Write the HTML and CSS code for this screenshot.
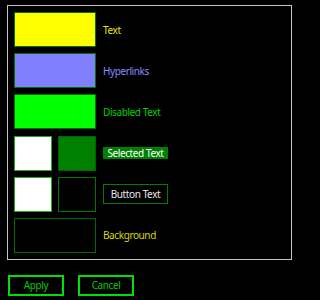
FILE: index.html
```html
<!DOCTYPE html>
<html>
<head>
<meta charset="utf-8">
<link rel="stylesheet" href="styles.css">
</head>
<body>
<div class="frame">
  <div class="row">
    <div class="swatch wide yellow"></div>
    <span class="label l-text">Text</span>
  </div>
  <div class="row">
    <div class="swatch wide blue"></div>
    <span class="label l-link">Hyperlinks</span>
  </div>
  <div class="row">
    <div class="swatch wide green"></div>
    <span class="label l-disabled">Disabled Text</span>
  </div>
  <div class="row">
    <div class="pair">
      <div class="swatch small white"></div>
      <div class="swatch small dkgreen"></div>
    </div>
    <span class="label l-selected">Selected Text</span>
  </div>
  <div class="row">
    <div class="pair">
      <div class="swatch small white"></div>
      <div class="swatch small black"></div>
    </div>
    <span class="label l-button">Button Text</span>
  </div>
  <div class="row">
    <div class="swatch wide bg"></div>
    <span class="label l-bg">Background</span>
  </div>
</div>
<div class="actions">
  <button class="btn">Apply</button>
  <button class="btn">Cancel</button>
</div>
</body>
</html>
```

FILE: styles.css
```css
html, body {
  margin: 0;
  padding: 0;
  background: #000;
}
body {
  width: 300px;
  height: 300px;
  overflow: hidden;
  font-family: "Noto Sans", "Liberation Sans", sans-serif;
  font-size: 10px;
  letter-spacing: -0.4px;
}
.frame {
  box-sizing: border-box;
  margin: 5px 0 0 7px;
  width: 285px;
  height: 255px;
  border: 1px solid #c4c4c4;
  padding: 6px 0 0 6px;
  display: flex;
  flex-direction: column;
  gap: 6.2px;
}
.row {
  display: flex;
  align-items: center;
  gap: 7px;
  height: 35px;
}
.swatch {
  box-sizing: border-box;
  height: 35px;
  border: 1px solid #007000;
}
.wide { width: 82px; }
.pair {
  display: flex;
  gap: 6px;
  width: 82px;
}
.small { width: 38px; }
.yellow { background: #ffff00; }
.blue { background: #8080ff; }
.green { background: #00ff00; }
.white { background: #fff; border-color: #1fa81f; }
.dkgreen { background: #008000; border-color: #006400; }
.black { background: #000; border-color: #007800; }
.bg { background: #000; border-color: #006c00; }
.label { white-space: nowrap; }
.l-text { color: #e8e800; }
.l-link { color: #8a8aff; }
.l-disabled { color: #00d000; }
.l-selected {
  box-sizing: border-box;
  width: 65px;
  height: 12px;
  line-height: 12px;
  background: #008000;
  color: #fff;
  text-align: center;
}
.l-button {
  box-sizing: border-box;
  width: 65px;
  height: 20px;
  line-height: 18px;
  border: 1px solid #008000;
  color: #e8e8e8;
  text-align: center;
}
.l-bg { color: #d8d800; }
.actions {
  display: flex;
  gap: 14px;
  margin: 15px 0 0 8px;
}
.btn {
  box-sizing: border-box;
  width: 56px;
  height: 21px;
  margin: 0;
  padding: 0;
  background: #000;
  border: 2px solid #00e000;
  color: #00c800;
  font-family: inherit;
  font-size: 10px;
  letter-spacing: -0.4px;
  line-height: 17px;
  text-align: center;
}
```
